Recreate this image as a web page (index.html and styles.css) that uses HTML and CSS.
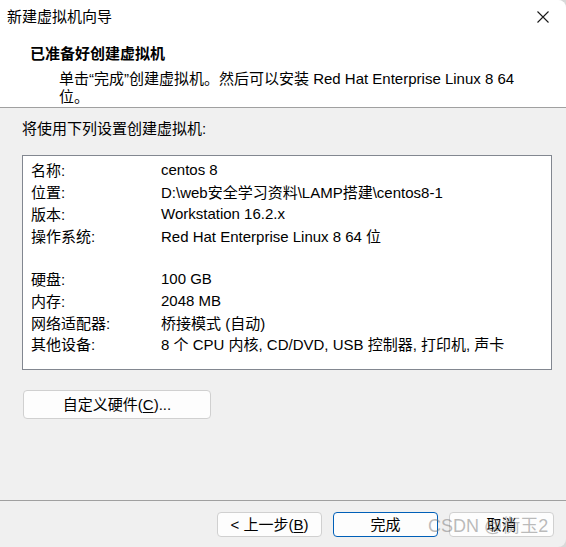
FILE: index.html
```html
<!DOCTYPE html>
<html lang="zh-CN">

<head>
    <meta charset="UTF-8">
    <meta name="viewport" content="width=device-width, initial-scale=1.0">
    <title>新建虚拟机向导</title>
    <link rel="stylesheet" href="styles.css">
</head>

<body>
    <div class="window">
        <div class="titlebar">
            <span class="title">新建虚拟机向导</span>
            <button class="close" aria-label="关闭">
                <svg width="12" height="12" viewBox="0 0 12 12">
                    <path d="M0.5 0.5 L11.5 11.5 M11.5 0.5 L0.5 11.5" stroke="#1a1a1a" stroke-width="1.1" fill="none"/>
                </svg>
            </button>
        </div>

        <div class="header">
            <h1>已准备好创建虚拟机</h1>
            <p class="subtitle">单击“完成”创建虚拟机。然后可以安装 Red Hat Enterprise Linux 8 64<br>位。</p>
        </div>

        <div class="content">
            <p class="intro">将使用下列设置创建虚拟机:</p>

            <div class="summary">
                <span>名称:</span><span>centos 8</span>
                <span>位置:</span><span>D:\web安全学习资料\LAMP搭建\centos8-1</span>
                <span>版本:</span><span>Workstation 16.2.x</span>
                <span>操作系统:</span><span>Red Hat Enterprise Linux 8 64 位</span>
                <span class="blank"></span><span class="blank"></span>
                <span>硬盘:</span><span>100 GB</span>
                <span>内存:</span><span>2048 MB</span>
                <span>网络适配器:</span><span>桥接模式 (自动)</span>
                <span>其他设备:</span><span>8 个 CPU 内核, CD/DVD, USB 控制器, 打印机, 声卡</span>
            </div>

            <button class="btn custom">自定义硬件(<u>C</u>)...</button>
        </div>

        <div class="footer">
            <button class="btn">&lt; 上一步(<u>B</u>)</button>
            <button class="btn primary">完成</button>
            <button class="btn">取消</button>
            <span class="watermark">CSDN @衡玉2</span>
        </div>
    </div>
</body>

</html>
```

FILE: styles.css
```css
* {
    box-sizing: border-box;
    margin: 0;
    padding: 0;
}

body {
    width: 566px;
    height: 547px;
    overflow: hidden;
    background: #d9d9d9;
    font-family: "Liberation Sans", "Noto Sans CJK SC", sans-serif;
    font-size: 15px;
    color: #000;
}

.window {
    position: relative;
    height: 547px;
    background: #f0f0f0;
    border-radius: 0 8px 8px 0;
    overflow: hidden;
    display: flex;
    flex-direction: column;
}

.titlebar {
    height: 34px;
    background: #fff;
    display: flex;
    align-items: center;
    justify-content: space-between;
    padding-left: 7px;
}

.title {
    line-height: 20px;
}

.close {
    width: 46px;
    height: 34px;
    border: none;
    background: transparent;
    display: flex;
    align-items: center;
    justify-content: center;
}

.header {
    height: 74px;
    background: #fff;
    border-bottom: 1px solid #a0a0a0;
    padding: 10px 0 0 30px;
}

h1 {
    font-size: 15px;
    font-weight: bold;
    line-height: 20px;
}

.subtitle {
    margin-top: 6px;
    padding-left: 29px;
    line-height: 18px;
}

.content {
    flex: 1;
    padding: 11px 14px 0 22px;
}

.intro {
    line-height: 20px;
    margin-bottom: 16px;
}

.summary {
    height: 215px;
    background: #fff;
    border: 1px solid #828790;
    padding: 3px 8px 0 8px;
    display: grid;
    grid-template-columns: 130px 1fr;
    grid-auto-rows: 21.75px;
    align-items: center;
    white-space: nowrap;
}

.blank {
    height: 21px;
}

.btn {
    height: 25px;
    width: 105px;
    background: #fdfdfd;
    border: 1px solid #d0d0d0;
    border-radius: 4px;
    font-family: inherit;
    font-size: 15px;
    color: #000;
    line-height: 20px;
}

.btn u {
    text-underline-offset: 2px;
}

.custom {
    width: 188px;
    height: 29px;
    margin: 20px 0 0 1px;
}

.primary {
    border: 1px solid #005fb8;
}

.footer {
    position: relative;
    height: 47px;
    border-top: 1px solid #a0a0a0;
    padding: 11px 12px 0 0;
    display: flex;
    justify-content: flex-end;
    align-items: flex-start;
    gap: 11px;
}

.watermark {
    position: absolute;
    left: 428px;
    top: 13px;
    font-family: "Liberation Sans", "Noto Sans CJK SC", sans-serif;
    font-size: 18px;
    line-height: 24px;
    color: rgba(120, 120, 120, 0.5);
    white-space: nowrap;
}
```
